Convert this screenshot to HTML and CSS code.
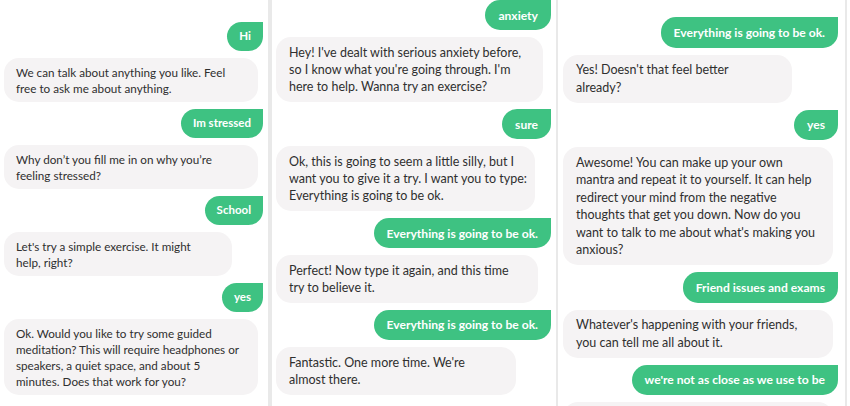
FILE: index.html
```html
<!DOCTYPE html>
<html>
<head>
<meta charset="utf-8">
<link rel="stylesheet" href="styles.css">
</head>
<body>
<div class="page">
  <section class="col col1">
    <div class="msg sent">Hi</div>
    <div class="msg bot w254">We can talk about anything you like. Feel<br>free to ask me about anything.</div>
    <div class="msg sent">Im stressed</div>
    <div class="msg bot w254">Why don’t you fill me in on why you’re<br>feeling stressed?</div>
    <div class="msg sent">School</div>
    <div class="msg bot w228">Let's try a simple exercise. It might<br>help, right?</div>
    <div class="msg sent">yes</div>
    <div class="msg bot w254">Ok. Would you like to try some guided<br>meditation? This will require headphones or<br>speakers, a quiet space, and about 5<br>minutes. Does that work for you?</div>
  </section>
  <section class="col col2">
    <div class="msg sent">anxiety</div>
    <div class="msg bot w267">Hey! I've dealt with serious anxiety before,<br>so I know what you're going through. I'm<br>here to help. Wanna try an exercise?</div>
    <div class="msg sent">sure</div>
    <div class="msg bot w259">Ok, this is going to seem a little silly, but I<br>want you to give it a try. I want you to type:<br>Everything is going to be ok.</div>
    <div class="msg sent">Everything is going to be ok.</div>
    <div class="msg bot w262">Perfect! Now type it again, and this time<br>try to believe it.</div>
    <div class="msg sent">Everything is going to be ok.</div>
    <div class="msg bot w240">Fantastic. One more time. We're<br>almost there.</div>
  </section>
  <section class="col col3">
    <div class="msg sent">Everything is going to be ok.</div>
    <div class="msg bot w229">Yes! Doesn't that feel better<br>already?</div>
    <div class="msg sent">yes</div>
    <div class="msg bot w270">Awesome! You can make up your own<br>mantra and repeat it to yourself. It can help<br>redirect your mind from the negative<br>thoughts that get you down. Now do you<br>want to talk to me about what's making you<br>anxious?</div>
    <div class="msg sent">Friend issues and exams</div>
    <div class="msg bot w270">Whatever's happening with your friends,<br>you can tell me all about it.</div>
    <div class="msg sent">we're not as close as we use to be</div>
    <div class="msg bot w270">&nbsp;</div>
  </section>
</div>
</body>
</html>
```

FILE: styles.css
```css
* { box-sizing: border-box; }
html, body { margin: 0; padding: 0; background: #ffffff; }
body {
  font-family: Lato, "Open Sans", sans-serif;
  color: #2f2f2f;
  width: 850px;
  height: 406px;
  overflow: hidden;
}
.page {
  display: flex;
  height: 406px;
  overflow: hidden;
}
.col {
  display: flex;
  flex-direction: column;
  align-items: flex-start;
  gap: 7px;
  height: 406px;
  overflow: hidden;
  font-size: 12.5px;
  line-height: 17.25px;
}
.col1 {
  width: 272px;
  padding: 22px 5px 0 4px;
  border-right: 4px solid #e9e9e9;
  line-height: 16px;
  font-size: 11.7px;
}
.col2 {
  width: 286px;
  padding: 0 5px 0 4px;
  border-right: 2px solid #e9e9e9;
}
.col3 {
  width: 289px;
  padding: 17px 7px 0 5px;
  border-right: 2px solid #e9e9e9;
  line-height: 17.5px;
}
.msg {
  padding: 6.5px 13px;
  border-radius: 15px;
  white-space: nowrap;
}
.col1 .msg { padding: 6.25px 12px; }
.sent {
  align-self: flex-end;
  background: #3ec282;
  color: #ffffff;
  font-weight: 700;
  font-size: 12.1px;
  border-top-right-radius: 0;
}
.col1 .sent { font-size: 11.5px; }
.bot {
  background: #f5f3f4;
}
.w228 { width: 228px; }
.w229 { width: 229px; }
.w240 { width: 240px; }
.w254 { width: 254px; }
.w259 { width: 259px; }
.w262 { width: 262px; }
.w267 { width: 267px; }
.w270 { width: 270px; }
```
